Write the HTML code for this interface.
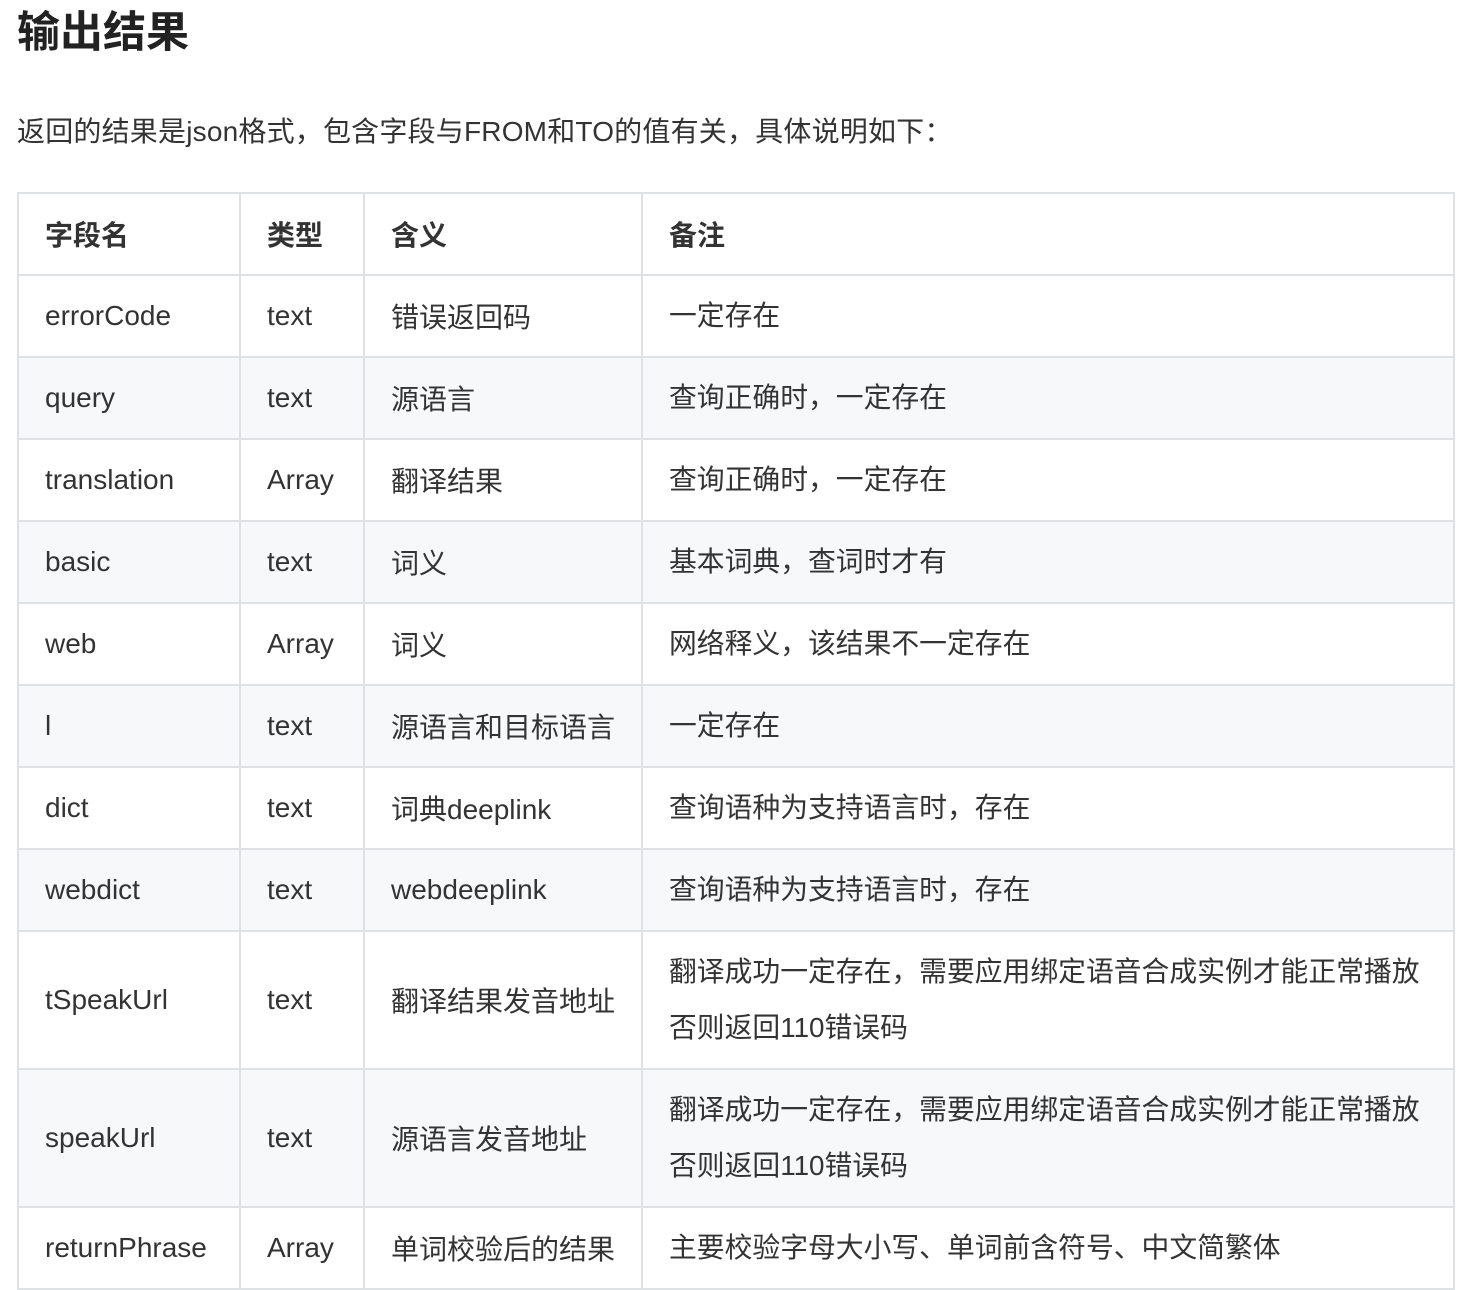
<!DOCTYPE html>
<html><head><meta charset="utf-8"><style>
body{margin:0;background:#fff;width:1461px;height:1267px;overflow:hidden;font-family:"Liberation Sans","Noto Sans CJK SC",sans-serif;color:#333;}
h1{position:absolute;left:17px;top:0;margin:0;font-size:43px;line-height:66px;font-weight:bold;color:#222;}
p{position:absolute;left:17px;top:112px;margin:0;font-size:28px;line-height:40px;letter-spacing:0.2px;}
table{position:absolute;left:17px;top:192px;border-collapse:collapse;table-layout:fixed;width:1436px;font-size:28px;}
td,th{border:2px solid #dfe2e5;padding:0 0 0 26px;text-align:left;vertical-align:middle;height:80px;}
th{font-weight:bold;}
tr:nth-child(odd) td{background:#f6f8fa;}
td.r{font-size:27.8px;line-height:56px;}
td.m{height:136px;}
</style></head><body>
<h1>输出结果</h1>
<p>返回的结果是json格式，包含字段与FROM和TO的值有关，具体说明如下：</p>
<table>
<colgroup><col style="width:222px"><col style="width:124px"><col style="width:278px"><col style="width:812px"></colgroup>
<tr><th>字段名</th><th>类型</th><th>含义</th><th>备注</th></tr>
<tr><td>errorCode</td><td>text</td><td>错误返回码</td><td class="r">一定存在</td></tr>
<tr><td>query</td><td>text</td><td>源语言</td><td class="r">查询正确时，一定存在</td></tr>
<tr><td>translation</td><td>Array</td><td>翻译结果</td><td class="r">查询正确时，一定存在</td></tr>
<tr><td>basic</td><td>text</td><td>词义</td><td class="r">基本词典，查词时才有</td></tr>
<tr><td>web</td><td>Array</td><td>词义</td><td class="r">网络释义，该结果不一定存在</td></tr>
<tr><td>l</td><td>text</td><td>源语言和目标语言</td><td class="r">一定存在</td></tr>
<tr><td>dict</td><td>text</td><td>词典deeplink</td><td class="r">查询语种为支持语言时，存在</td></tr>
<tr><td>webdict</td><td>text</td><td>webdeeplink</td><td class="r">查询语种为支持语言时，存在</td></tr>
<tr><td class="m">tSpeakUrl</td><td>text</td><td>翻译结果发音地址</td><td class="r">翻译成功一定存在，需要应用绑定语音合成实例才能正常播放<br>否则返回110错误码</td></tr>
<tr><td class="m">speakUrl</td><td>text</td><td>源语言发音地址</td><td class="r">翻译成功一定存在，需要应用绑定语音合成实例才能正常播放<br>否则返回110错误码</td></tr>
<tr><td>returnPhrase</td><td>Array</td><td>单词校验后的结果</td><td class="r">主要校验字母大小写、单词前含符号、中文简繁体</td></tr>
</table>
</body></html>
